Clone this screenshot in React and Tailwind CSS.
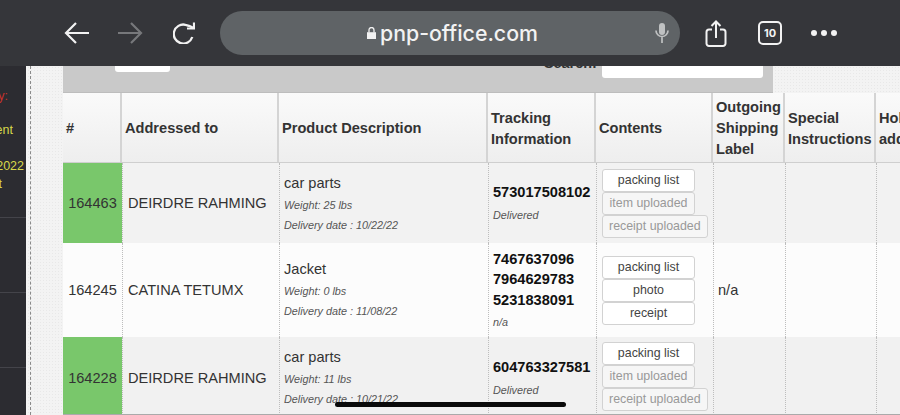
const rows = [
  {
    id: '164463',
    name: 'DEIRDRE RAHMING',
    product: 'car parts',
    weight: 'Weight: 25 lbs',
    date: 'Delivery date : 10/22/22',
    tracking: ['573017508102'],
    status: 'Delivered',
    uploaded: true,
    green: true,
    height: 'h-[80px]',
    bg: 'bg-[#f2f2f2]',
    productPad: 'pt-[3px]',
    contentsPad: '',
  },
  {
    id: '164245',
    name: 'CATINA TETUMX',
    product: 'Jacket',
    weight: 'Weight: 0 lbs',
    date: 'Delivery date : 11/08/22',
    tracking: ['7467637096', '7964629783', '5231838091'],
    status: 'n/a',
    label: 'n/a',
    height: 'h-[94px]',
    bg: 'bg-[#fcfcfc]',
    productPad: 'pt-[1px]',
    contentsPad: '',
  },
  {
    id: '164228',
    name: 'DEIRDRE RAHMING',
    product: 'car parts',
    weight: 'Weight: 11 lbs',
    date: 'Delivery date : 10/21/22',
    tracking: ['604763327581'],
    status: 'Delivered',
    uploaded: true,
    green: true,
    height: 'h-[82px]',
    bg: 'bg-[#f1f1f1]',
    productPad: 'pt-[1px]',
    contentsPad: 'pb-[3px]',
  },
];

const cellBorder = 'border-l border-dotted border-[#bdbdbd]';

function Btn({ children, muted }) {
  return (
    <div
      className={`h-[23px] px-[6px] w-fit min-w-[93px] flex items-center justify-center rounded-[3px] border border-[#d2d2d2] text-[12.4px] ${
        muted ? 'bg-[#f6f6f6] text-[#999]' : 'bg-white text-[#444]'
      }`}
    >
      {children}
    </div>
  );
}

function Head({ className, children }) {
  return (
    <div className={`flex items-center pl-[3px] pt-[2px] leading-[21px] font-bold text-[14.6px] text-[#333] border-r-2 border-[#d4d4d4] ${className}`}>
      <div>{children}</div>
    </div>
  );
}

function Row({ row }) {
  return (
    <div className={`flex ${row.height} ${row.bg} text-[#333] overflow-hidden`}>
      <div className={`w-[59px] shrink-0 flex items-center justify-center pt-[2px] text-[14.6px] ${row.green ? 'bg-[#79c76b]' : ''}`}>
        {row.id}
      </div>
      <div className={`w-[157px] shrink-0 flex items-center pl-[5px] pt-[2px] text-[14.6px] ${cellBorder}`}>{row.name}</div>
      <div className={`w-[209px] shrink-0 flex flex-col justify-center pl-[4px] ${row.productPad} ${cellBorder}`}>
        <div className="text-[14.6px] leading-[20px] mb-[2px]">{row.product}</div>
        <div className="text-[10.8px] italic leading-[20px] text-[#555]">{row.weight}</div>
        <div className="text-[10.8px] italic leading-[21px] text-[#555]">{row.date}</div>
      </div>
      <div className={`w-[108px] shrink-0 flex flex-col justify-center pl-[4px] pt-[3px] ${cellBorder}`}>
        {row.tracking.map((t) => (
          <div key={t} className="font-bold text-[14.6px] leading-[20.500px] text-[#111]">{t}</div>
        ))}
        <div className="text-[10.8px] italic leading-[24px] text-[#555]">{row.status}</div>
      </div>
      <div className={`w-[117px] shrink-0 flex flex-col justify-center pl-[5px] ${row.contentsPad} ${cellBorder}`}>
        <Btn>packing list</Btn>
        <Btn muted={row.uploaded}>{row.uploaded ? 'item uploaded' : 'photo'}</Btn>
        <Btn muted={row.uploaded}>{row.uploaded ? 'receipt uploaded' : 'receipt'}</Btn>
      </div>
      <div className={`w-[72px] shrink-0 flex items-center pl-[4px] pt-[2px] text-[14.6px] ${cellBorder}`}>{row.label}</div>
      <div className={`w-[91px] shrink-0 ${cellBorder}`} />
      <div className={`flex-1 ${cellBorder}`} />
    </div>
  );
}

function BrowserBar() {
  return (
    <div className="relative z-10 h-[66px] shrink-0 bg-[#35363a] flex items-center text-[#f2f2f2]">
      <svg className="ml-[64px] w-[26px] h-[24px]" viewBox="0 0 26 24" fill="none" stroke="currentColor" strokeWidth="2.2">
        <path d="M25 12H2M12 2 2 12l10 10" />
      </svg>
      <svg className="ml-[27px] w-[26px] h-[24px] text-[#77787b]" viewBox="0 0 26 24" fill="none" stroke="currentColor" strokeWidth="2.2">
        <path d="M1 12h23M14 2l10 10-10 10" />
      </svg>
      <svg className="ml-[30px] w-[22px] h-[22px]" viewBox="0 0 22 22" fill="none" stroke="currentColor" strokeWidth="2.3">
        <path d="M19.300 15A9.500 9.500 0 1 1 12.500 2.800C15.500 3.400 18 4.400 20.500 6" />
        <path d="M21 0.500V6.500H14" strokeWidth="2.2" />
      </svg>
      <div className="ml-[25px] w-[460px] h-[44px] rounded-[22px] bg-[#5f6366] flex items-center">
        <svg className="ml-[147px] w-[9px] h-[12px]" viewBox="0 0 9 12" fill="#f2f2f2">
          <path d="M0 5.2h9V12H0z" />
          <path d="M2 5.5V3a2.500 2.500 0 0 1 5 0v2.500" fill="none" stroke="#f2f2f2" strokeWidth="1.300" />
        </svg>
        <span className="ml-[4px] w-[157px] pt-[1px] font-['Inter',sans-serif] text-[21.3px] font-medium whitespace-nowrap">pnp-office.com</span>
        <svg className="ml-[118px] w-[14px] h-[20px] text-[#bfc1c2]" viewBox="0 0 14 20" fill="none" stroke="currentColor" strokeWidth="1.700">
          <rect x="4" y="0" width="6" height="12" rx="3" fill="currentColor" stroke="none" />
          <path d="M1 7.500a6 6 0 0 0 12 0M7 14v6" />
        </svg>
      </div>
      <svg className="ml-[25px] w-[22px] h-[27px]" viewBox="0 0 22 27" fill="none" stroke="currentColor" strokeWidth="2">
        <path d="M7 9.500H4a2.500 2.500 0 0 0-2.500 2.500v11.500A2.500 2.500 0 0 0 4 26h14a2.500 2.500 0 0 0 2.500-2.500V12A2.500 2.500 0 0 0 18 9.500h-3" />
        <path d="M11 18V1.500M6.500 6 11 1.500 15.500 6" />
      </svg>
      <div className="ml-[31px] w-[24px] h-[24px] rounded-[5px] border-2 border-[#f2f2f2] flex items-center justify-center font-['Inter',sans-serif] text-[11px] font-bold">
        10
      </div>
      <div className="ml-[29px] flex gap-[4px]">
        <div className="w-[6px] h-[6px] rounded-full bg-[#f2f2f2]" />
        <div className="w-[6px] h-[6px] rounded-full bg-[#f2f2f2]" />
        <div className="w-[6px] h-[6px] rounded-full bg-[#f2f2f2]" />
      </div>
    </div>
  );
}

function Sidebar() {
  return (
    <div className="w-[26px] shrink-0 bg-[#2c2c31] flex flex-col text-[12.5px] overflow-hidden">
      <div className="h-[152px] shrink-0 border-b border-[#44444a] flex flex-col items-end pt-[22px] whitespace-nowrap">
        <div className="text-[#c9322b] leading-[16px] pr-[18px]">y:</div>
        <div className="text-[#d8d84a] leading-[16px] mt-[18px] pr-[13px]">ent</div>
        <div className="text-[#d8d84a] leading-[16px] mt-[20px] pr-[2px]">2022</div>
        <div className="text-[#d8d84a] leading-[16px] mt-[2px] pr-[24px]">t</div>
      </div>
      <div className="h-[75px] shrink-0 border-b border-[#44444a]" />
      <div className="h-[75px] shrink-0 border-b border-[#44444a]" />
    </div>
  );
}

export default function App() {
  return (
    <div className="relative w-[900px] h-[415px] overflow-hidden flex flex-col bg-[#f3f3f3] bg-[radial-gradient(#e8e8e8_1px,transparent_1px)] bg-[length:3px_3px] font-['Liberation_Sans',Arial,sans-serif]">
      <BrowserBar />
      <div className="flex flex-1 min-h-0">
        <Sidebar />
        <div className="w-[37px] shrink-0 pl-[4px]">
          <div className="h-full border-l border-dashed border-[#8a8a8a]" />
        </div>
        <div className="flex-1 min-w-0 overflow-hidden border-b border-[#aaa]">
          <div className="w-[710px] h-[27px] bg-[#c9c9c9] flex items-start overflow-hidden border-b border-[#bdbdbd]">
            <div className="ml-[52px] w-[55px] h-[6px] bg-white rounded-b-[3px]" />
            <div className="ml-[374px] -mt-[11px] font-bold text-[14.4px] leading-[16px] text-[#333]">Search:</div>
            <div className="ml-[5px] w-[161px] h-[12px] bg-white rounded-b-[3px]" />
          </div>
          <div className="flex h-[70px] bg-gradient-to-b from-[#fafafa] to-[#eeeeee] border-b border-[#cfcfcf]">
            <Head className="w-[59px] shrink-0">#</Head>
            <Head className="w-[157px] shrink-0">Addressed to</Head>
            <Head className="w-[209px] shrink-0">Product Description</Head>
            <Head className="w-[108px] shrink-0">Tracking<br />Information</Head>
            <Head className="w-[117px] shrink-0">Contents</Head>
            <Head className="w-[72px] shrink-0">Outgoing<br />Shipping<br />Label</Head>
            <Head className="w-[91px] shrink-0">Special<br />Instructions</Head>
            <Head className="flex-1 whitespace-nowrap border-r-0">Hold<br />address</Head>
          </div>
          {rows.map((row) => (
            <Row key={row.id} row={row} />
          ))}
        </div>
      </div>
      <div className="absolute left-[335px] top-[402px] w-[231px] h-[5px] rounded-full bg-[#0a0a0a]" />
    </div>
  );
}
